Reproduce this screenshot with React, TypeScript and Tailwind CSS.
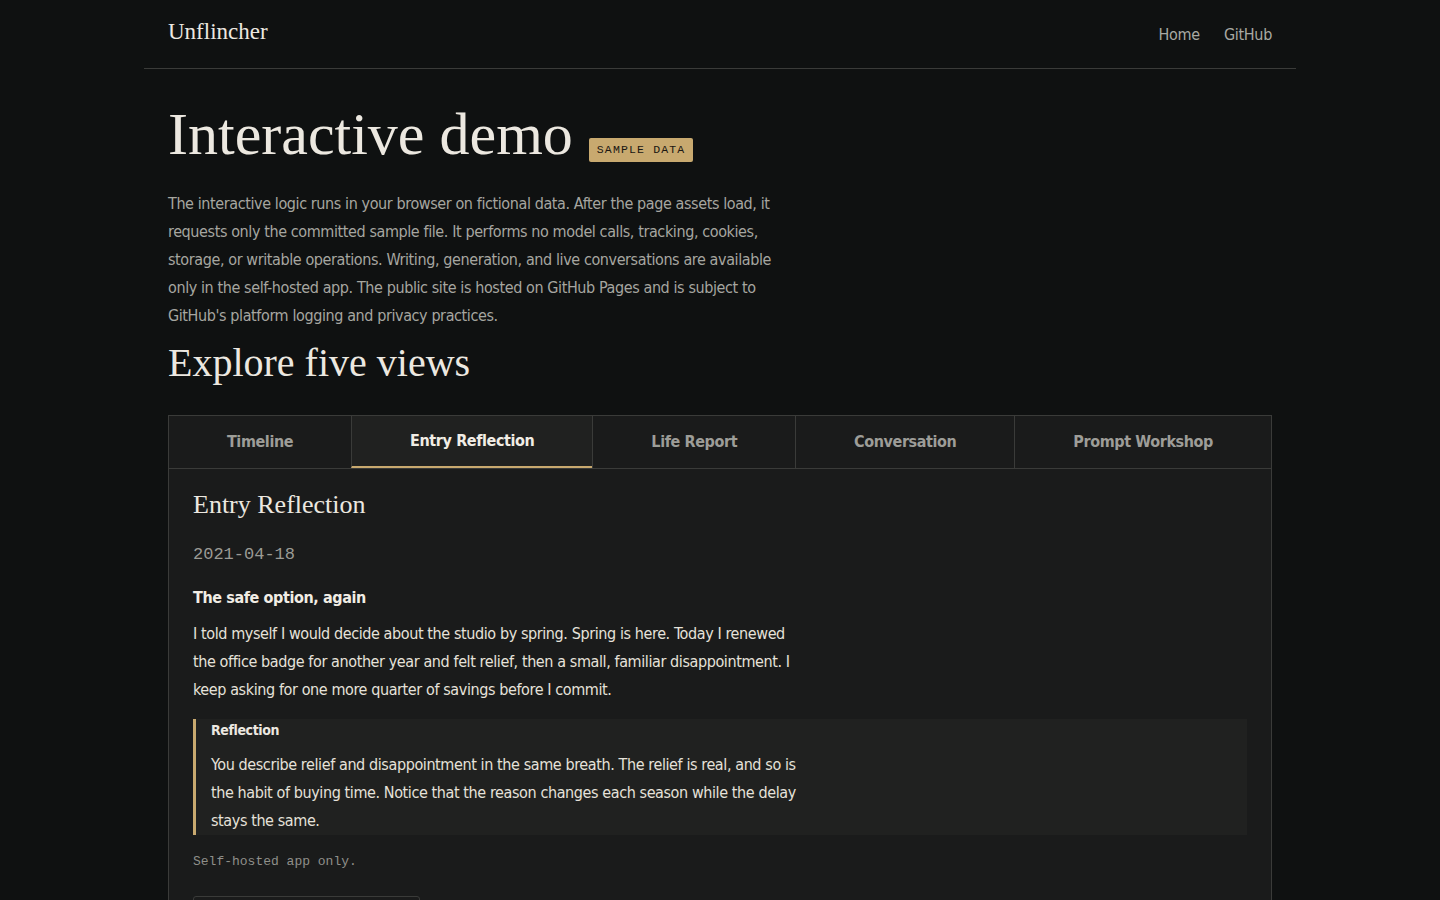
import { useState } from "react";

const tabs = ["Timeline", "Entry Reflection", "Life Report", "Conversation", "Prompt Workshop"];

const sans = "font-['DejaVu_Sans_Condensed',Roboto,sans-serif]";
const serif = "font-['Liberation_Serif','DejaVu_Serif',serif]";
const mono = "font-['Liberation_Mono','DejaVu_Sans_Mono',monospace]";

const intro = [
  "The interactive logic runs in your browser on fictional data. After the page assets load, it",
  "requests only the committed sample file. It performs no model calls, tracking, cookies,",
  "storage, or writable operations. Writing, generation, and live conversations are available",
  "only in the self-hosted app. The public site is hosted on GitHub Pages and is subject to",
  "GitHub's platform logging and privacy practices.",
];

const entry = [
  "I told myself I would decide about the studio by spring. Spring is here. Today I renewed",
  "the office badge for another year and felt relief, then a small, familiar disappointment. I",
  "keep asking for one more quarter of savings before I commit.",
];

const reflection = [
  "You describe relief and disappointment in the same breath. The relief is real, and so is",
  "the habit of buying time. Notice that the reason changes each season while the delay",
  "stays the same.",
];

function Lines({ lines }: { lines: string[] }) {
  return (
    <>
      {lines.map((l) => (
        <span key={l} className="block whitespace-nowrap">
          {l}
        </span>
      ))}
    </>
  );
}

export default function App() {
  const [active, setActive] = useState(1);

  return (
    <div className={`min-h-screen bg-[#0f1111] tracking-[-0.4px] text-[#e9e5dd] ${sans}`}>
      <div className="mx-auto w-[1152px]">
        {/* Header */}
        <header className="flex h-[69px] items-start justify-between border-b border-[#3a3b39] px-6">
          <a className={`mt-[15px] text-[23px] tracking-normal text-[#ece8e0] ${serif}`}>Unflincher</a>
          <nav className="mt-[23px] flex gap-6 text-[16px] tracking-[-0.3px] text-[#a9a9a3]">
            <a>Home</a>
            <a>GitHub</a>
          </nav>
        </header>

        <main className="px-6">
          <div className="mt-[34px] flex items-end gap-4">
            <h1 className={`text-[60px] leading-[62px] tracking-normal text-[#ece8e0] ${serif}`}>Interactive demo</h1>
            <span
              className={`mb-[3px] rounded-[2px] bg-[#c8a96f] px-2 py-[5px] text-[11.5px] leading-[14px] tracking-[0.1em] text-[#1a1712] ${mono}`}
            >
              SAMPLE DATA
            </span>
          </div>

          <p className="mt-[25px] text-[16px] leading-[28px] text-[#a6a6a0]">
            <Lines lines={intro} />
          </p>

          <h2 className={`mt-[8px] text-[40px] leading-[50px] tracking-normal text-[#ece8e0] ${serif}`}>
            Explore five views
          </h2>

          <section className="mt-[27px] border border-[#3a3b39] bg-[#1a1b1b]">
            <div className="flex border-b border-[#3a3b39]">
              {tabs.map((t, i) => (
                <button
                  key={t}
                  onClick={() => setActive(i)}
                  className={`h-[52px] flex-auto border-l border-[#3a3b39] text-[16px] font-bold first:border-l-0 ${
                    i === active
                      ? "border-b-2 border-b-[#c8a96f] bg-[#202120] text-[#f1ede5]"
                      : "text-[#9d9d98]"
                  }`}
                >
                  {t}
                </button>
              ))}
            </div>

            <div className="px-6 pt-[18px] pb-10">
              <h3 className={`text-[26px] leading-[36px] tracking-normal text-[#ece8e0] ${serif}`}>Entry Reflection</h3>
              <div className={`mt-[20px] text-[17px] leading-[24px] tracking-normal text-[#9a9a94] ${mono}`}>
                2021-04-18
              </div>
              <div className="mt-[19px] text-[16px] font-bold leading-[24px] text-[#f1ede5]">The safe option, again</div>
              <p className="mt-[10px] text-[16px] leading-[28px] text-[#e6e2da]">
                <Lines lines={entry} />
              </p>

              <div className="mt-[15px] border-l-[3px] border-[#c8a96f] bg-[#202120] pt-[1px] pl-[15px]">
                <div className="text-[14px] font-bold leading-[20px] text-[#ece8e0]">Reflection</div>
                <p className="mt-[11px] text-[16px] leading-[28px] text-[#e6e2da]">
                  <Lines lines={reflection} />
                </p>
              </div>

              <div className={`mt-[17px] text-[13px] leading-[20px] tracking-normal text-[#8f8f8a] ${mono}`}>
                Self-hosted app only.
              </div>

              <div className="mt-[24px] h-[44px] w-[227px] rounded-[3px] border border-[#3a3b39]" />
            </div>
          </section>
        </main>
      </div>
    </div>
  );
}
